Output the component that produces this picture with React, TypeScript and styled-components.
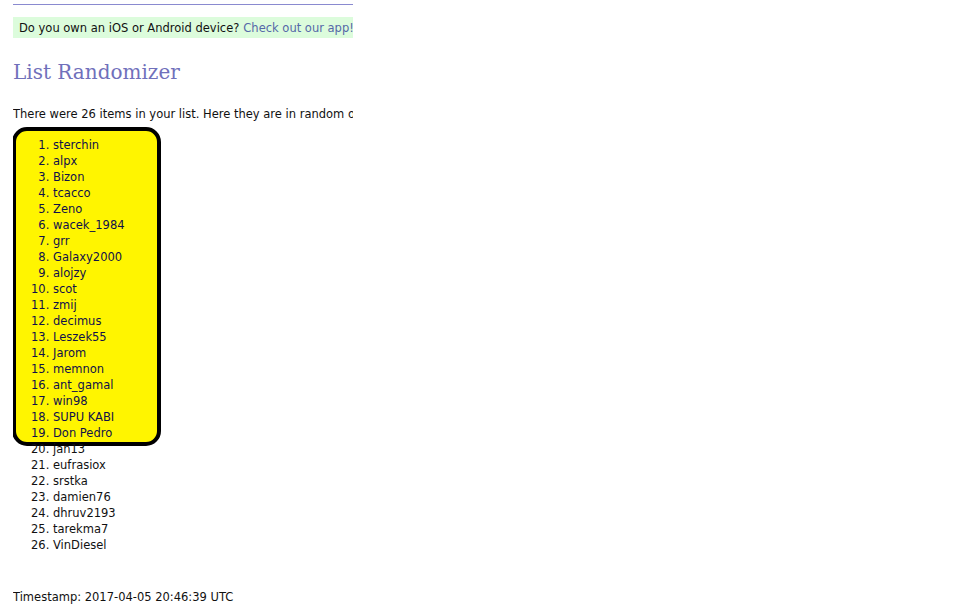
import React from "react";
import styled, { createGlobalStyle } from "styled-components";

const Global = createGlobalStyle`
  html, body { margin: 0; padding: 0; background: #ffffff; }
  body { font-family: "DejaVu Sans", Verdana, sans-serif; font-size: 11.5px; color: #111; }
`;

const Page = styled.div`
  width: 340px;
  margin-left: 13px;
  overflow: hidden;
  white-space: nowrap;
`;

const Rule = styled.div`
  height: 1px;
  background: #8a8ad0;
  margin-top: 4px;
`;

const AppBar = styled.div`
  margin-top: 12px;
  height: 21px;
  background: #dcfcdc;
  padding-left: 6px;
  display: flex;
  align-items: center;
  color: #111;
`;

const AppLink = styled.a`
  color: #5568a8;
  text-decoration: none;
  margin-left: 4px;
`;

const Title = styled.h1`
  margin: 20px 0 0 0;
  font-family: "DejaVu Serif", Georgia, serif;
  font-weight: normal;
  font-size: 20px;
  line-height: 28px;
  color: #7070bb;
`;

const Intro = styled.p`
  margin: 20px 0 0 0;
  line-height: 16px;
`;

const ListWrap = styled.div`
  position: relative;
  margin-top: 15px;
`;

const Highlight = styled.div`
  position: absolute;
  left: -1px;
  top: -10px;
  width: 141px;
  height: 311px;
  background: #fff500;
  border: 4px solid #000;
  border-radius: 15px;
  z-index: 0;
`;

const List = styled.ol`
  position: relative;
  z-index: 1;
  margin: 0;
  padding: 0 0 0 40px;
  line-height: 16px;
`;

const Item = styled.li<{ $hl: boolean }>`
  color: ${(p) => (p.$hl ? "#10104a" : "#111")};
`;

const Stamp = styled.p`
  margin: 36px 0 0 0;
  line-height: 16px;
`;

const items = [
  "sterchin", "alpx", "Bizon", "tcacco", "Zeno", "wacek_1984", "grr",
  "Galaxy2000", "alojzy", "scot", "zmij", "decimus", "Leszek55", "Jarom",
  "memnon", "ant_gamal", "win98", "SUPU KABI", "Don Pedro", "jan13",
  "eufrasiox", "srstka", "damien76", "dhruv2193", "tarekma7", "VinDiesel",
];

export default function App() {
  return (
    <>
      <Global />
      <Page>
        <Rule />
        <AppBar>
          Do you own an iOS or Android device?<AppLink href="#">Check out our app!</AppLink>
        </AppBar>
        <Title>List Randomizer</Title>
        <Intro>There were 26 items in your list. Here they are in random order:</Intro>
        <ListWrap>
          <Highlight />
          <List>
            {items.map((it, i) => (
              <Item key={i} $hl={i < 19}>{it}</Item>
            ))}
          </List>
        </ListWrap>
        <Stamp>Timestamp: 2017-04-05 20:46:39 UTC</Stamp>
      </Page>
    </>
  );
}
